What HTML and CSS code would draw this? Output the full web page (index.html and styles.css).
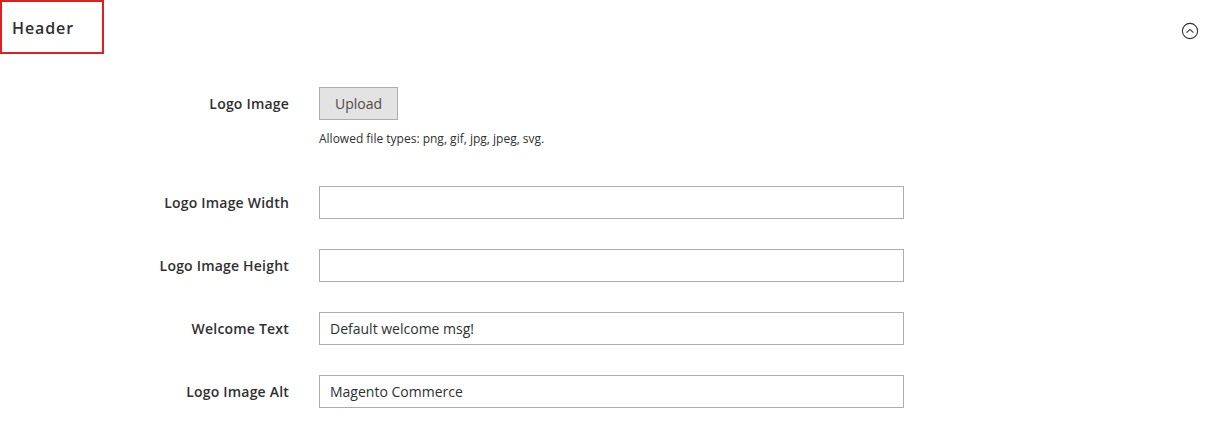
FILE: index.html
```html
<!DOCTYPE html>
<html>
<head>
<meta charset="utf-8">
<link rel="stylesheet" href="styles.css">
</head>
<body>
<div class="section-head">
  <div class="title-box"><span class="title">Header</span></div>
  <span class="toggle">
    <svg width="18" height="18" viewBox="0 0 18 18"><circle cx="9" cy="9" r="7.6" fill="none" stroke="#303030" stroke-width="1.1"/><path d="M5.6 10.6 L9 7.4 L12.4 10.6" fill="none" stroke="#303030" stroke-width="1.1"/></svg>
  </span>
</div>
<div class="form">
  <div class="row row-upload">
    <label class="label">Logo Image</label>
    <div class="control">
      <button class="btn">Upload</button>
      <div class="note">Allowed file types: png, gif, jpg, jpeg, svg.</div>
    </div>
  </div>
  <div class="row">
    <label class="label">Logo Image Width</label>
    <div class="control"><input class="input" type="text" value=""></div>
  </div>
  <div class="row">
    <label class="label">Logo Image Height</label>
    <div class="control"><input class="input" type="text" value=""></div>
  </div>
  <div class="row">
    <label class="label">Welcome Text</label>
    <div class="control"><input class="input" type="text" value="Default welcome msg!"></div>
  </div>
  <div class="row">
    <label class="label">Logo Image Alt</label>
    <div class="control"><input class="input" type="text" value="Magento Commerce"></div>
  </div>
</div>
</body>
</html>
```
FILE: styles.css
```css
html, body {
  margin: 0;
  padding: 0;
  background: #fff;
}
body {
  font-family: "Open Sans", "Liberation Sans", sans-serif;
  color: #303030;
  width: 1209px;
  height: 424px;
  overflow: hidden;
}
.section-head {
  display: flex;
  justify-content: space-between;
  align-items: flex-start;
}
.title-box {
  box-sizing: border-box;
  width: 104px;
  height: 54px;
  border: 2px solid #e02020;
  padding: 15px 0 0 10px;
}
.title {
  font-size: 16px;
  font-weight: 600;
  color: #303030;
  letter-spacing: 0.9px;
  line-height: 22px;
}
.toggle {
  display: block;
  width: 18px;
  height: 18px;
  margin: 22px 10px 0 0;
}
.toggle svg { display: block; }
.form {
  padding-top: 33px;
}
.row {
  display: flex;
  align-items: flex-start;
  margin-bottom: 30px;
}
.row-upload {
  margin-bottom: 38px;
}
.label {
  width: 289px;
  height: 33px;
  text-align: right;
  font-size: 14px;
  font-weight: 600;
  color: #303030;
  line-height: 34px;
  letter-spacing: 0.2px;
  padding-right: 30px;
  box-sizing: content-box;
  flex: none;
}
.control {
  flex: none;
}
.btn {
  box-sizing: border-box;
  height: 33px;
  width: 79px;
  background: #e3e3e3;
  border: 1px solid #adadad;
  color: #514943;
  font-family: "Open Sans", "Liberation Sans", sans-serif;
  font-size: 14px;
  padding: 0;
  display: block;
}
.note {
  font-size: 12px;
  color: #303030;
  margin-top: 10px;
  line-height: 18px;
}
.input {
  box-sizing: border-box;
  width: 585px;
  height: 33px;
  border: 1px solid #adadad;
  padding: 0 10px;
  font-family: "Open Sans", "Liberation Sans", sans-serif;
  font-size: 14px;
  color: #303030;
  display: block;
  margin: 0;
}
```
